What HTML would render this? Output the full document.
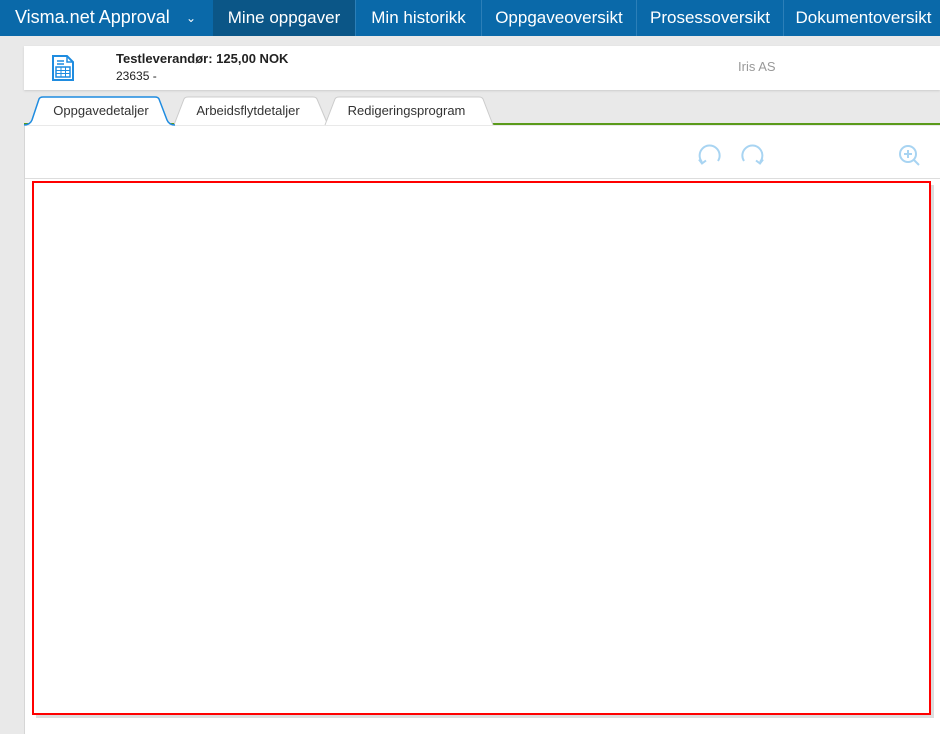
<!DOCTYPE html>
<html><head><meta charset="utf-8"><style>
*{margin:0;padding:0;box-sizing:border-box}
body{width:940px;height:733px;overflow:hidden;background:#e9e9e9;font-family:"Liberation Sans",sans-serif;position:relative}
.nav{position:absolute;left:0;top:0;width:940px;height:36px;background:#0a69a9;color:#fff;font-size:17px}
.nav div{position:absolute;top:0;height:36px;line-height:35px;border-left:1px solid #2c7fb8;text-align:center}
.card{position:absolute;left:24px;top:46px;width:916px;height:44px;background:#fff;box-shadow:0 1px 2px #ccc}
.main{position:absolute;left:24px;top:125px;width:916px;height:608px;background:#fff;border-left:1px solid #d6d6d6}
.green{position:absolute;left:24px;top:123px;width:916px;height:2px;background:#5a9a1a}
.tab{position:absolute;top:97px;height:28px;font-size:13px;color:#333;text-align:center;line-height:27px}
</style></head><body>
<div class="nav">
<div style="left:0;width:213px;border:none;text-align:left;padding-left:15px;font-size:18px">Visma.net Approval<span style="position:absolute;left:186px;top:1px;font-size:12px">&#8964;</span></div>
<div style="left:213px;width:142px;background:#0b5687;border-left:none">Mine oppgaver</div>
<div style="left:355px;width:126px">Min historikk</div>
<div style="left:481px;width:155px">Oppgaveoversikt</div>
<div style="left:636px;width:147px">Prosessoversikt</div>
<div style="left:783px;width:160px">Dokumentoversikt</div>
</div>
<div class="card">
<svg style="position:absolute;left:28px;top:9px" width="22" height="26" viewBox="0 0 22 26"><path d="M1 1H15L21 7V25H1Z" fill="#fff" stroke="#1f8ce0" stroke-width="2"/><path d="M15 1V7H21" fill="none" stroke="#1f8ce0" stroke-width="1.5"/><path d="M5 6H12M5 9H12" stroke="#1f8ce0" stroke-width="1.5"/><rect x="4" y="12" width="14" height="10" fill="none" stroke="#1f8ce0" stroke-width="1.5"/><path d="M4 15.5H18M4 18.5H18M9 12V22M13.5 12V22" stroke="#1f8ce0" stroke-width="1"/></svg>
<div style="position:absolute;left:92px;top:5px;font-size:13px;font-weight:bold;color:#222">Testleverandør: 125,00 NOK</div>
<div style="position:absolute;left:92px;top:23px;font-size:12px;color:#222">23635 -</div>
<div style="position:absolute;left:714px;top:13px;font-size:13px;color:#999">Iris AS</div>
</div>
<div class="green"></div>
<svg style="position:absolute;left:24px;top:96px" width="480" height="30">
<path d="M150 29L160 3Q161 1 164 1H289Q292 1 293 3L304 29" fill="#fff" stroke="#ccc"/>
<path d="M301 29L311 3Q312 1 315 1H455Q458 1 459 3L469 29" fill="#fff" stroke="#ccc"/>
<path d="M0 29Q6 29 8 24L15 3Q16 1 19 1H131Q134 1 135 3L143 24Q145 29 151 29" fill="#fff" stroke="#1f8ce0" stroke-width="1.5"/>
</svg>
<div class="tab" style="left:41px;width:120px">Oppgavedetaljer</div>
<div class="tab" style="left:183px;width:130px">Arbeidsflytdetaljer</div>
<div class="tab" style="left:334px;width:145px">Redigeringsprogram</div>
<div class="main" style="top:126px">
<div style="position:absolute;left:0;top:52px;width:916px;height:1px;background:#ddd"></div>
<svg style="position:absolute;left:673px;top:17px" width="66" height="26" viewBox="0 0 66 26" fill="none" stroke="#a8d4f2" stroke-width="2"><path d="M20 18A10 10 0 1 0 4 19"/><path d="M1 16.5L4 20.5L8 17.5"/><path d="M46 18A10 10 0 1 1 62 19"/><path d="M65 16.5L62 20.5L58 17.5"/></svg>
<svg style="position:absolute;left:872px;top:18px" width="44" height="24" viewBox="0 0 44 24" fill="none" stroke="#a8d4f2" stroke-width="2"><circle cx="11" cy="10" r="8"/><path d="M17 16L22 21M11 6V14M7 10H15"/><circle cx="52" cy="10" r="8"/></svg>
</div>
<div style="position:absolute;left:36px;top:185px;width:898px;height:533px;background:#ddd"></div>
<div style="position:absolute;left:32px;top:181px;width:899px;height:534px;border:2px solid #f00;background:#fff"></div>
</body></html>
